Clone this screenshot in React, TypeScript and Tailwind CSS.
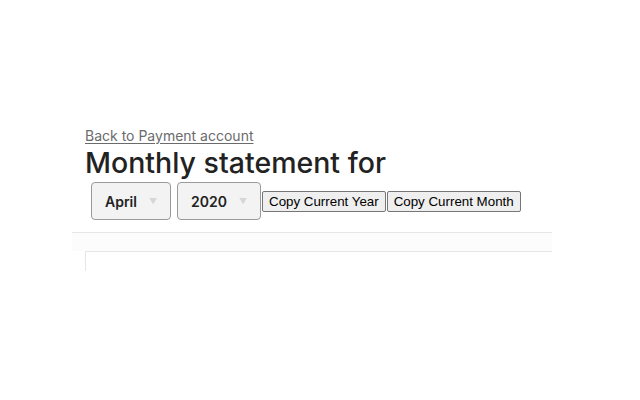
export default function App() {
  return (
    <div className="w-[640px] h-[400px] bg-white font-['Inter',sans-serif]">
      <div className="ml-[72px] w-[480px] pt-[127px]">
        <div className="pl-[13px]">
          <a href="#" className="block text-[14px] leading-[18px] text-[#6b6b6b] underline underline-offset-2">
            Back to Payment account
          </a>
          <h1 className="text-[28.5px] leading-[36px] font-medium text-[#222222]">
            Monthly statement for
          </h1>
          <div className="flex items-center pl-[6px] pt-[1px]">
            <div className="flex items-center justify-between w-[80px] h-[38px] px-[13px] rounded-[4px] border border-[#9a9a9a] bg-[#f3f3f3]">
              <span className="text-[14px] font-semibold text-[#222222]">April</span>
              <span className="text-[8px] text-[#d6d6d6]">▼</span>
            </div>
            <div className="ml-[6px] flex items-center justify-between w-[84px] h-[38px] px-[13px] rounded-[4px] border border-[#9a9a9a] bg-[#f3f3f3]">
              <span className="text-[14px] font-semibold text-[#222222]">2020</span>
              <span className="text-[8px] text-[#d6d6d6]">▼</span>
            </div>
            <button className="ml-[1px] mt-[1px] h-[21px] px-[6px] border border-[#767676] rounded-[2px] bg-[#efefef] text-[13.33px] leading-[17px] text-black font-['Liberation_Sans',Arial,sans-serif]">
              Copy Current Year
            </button>
            <button className="ml-[1px] mt-[1px] h-[21px] px-[6px] border border-[#767676] rounded-[2px] bg-[#efefef] text-[13.33px] leading-[17px] text-black font-['Liberation_Sans',Arial,sans-serif]">
              Copy Current Month
            </button>
          </div>
        </div>
        <div className="mt-[12px] border-t border-[#e6e6e6] h-[19px] bg-[#fdfcfd]"></div>
        <div className="ml-[13px] border-t border-l border-[#e6e6e6] h-[20px]"></div>
      </div>
    </div>
  );
}
